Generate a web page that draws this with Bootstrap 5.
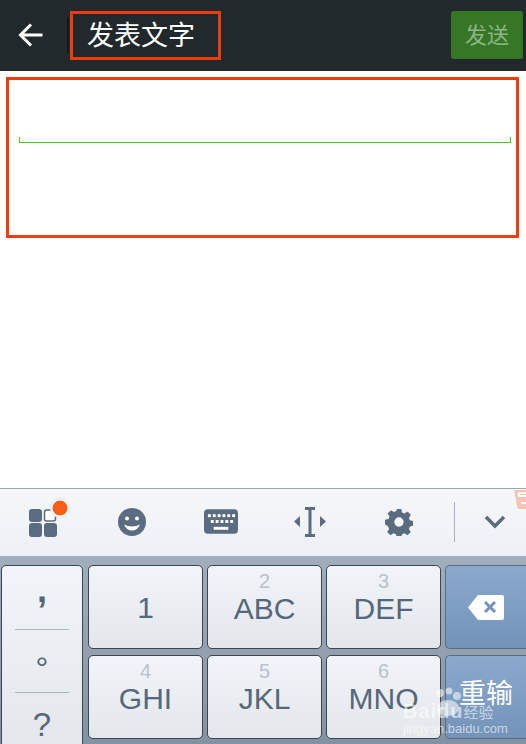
<!DOCTYPE html>
<html lang="zh">

<head>
  <meta charset="UTF-8" />
  <meta name="viewport" content="width=device-width, initial-scale=1" />
  <title>发表文字</title>
  <link href="https://cdn.jsdelivr.net/npm/bootstrap@5.3.3/dist/css/bootstrap.min.css" rel="stylesheet">
  <style>
    html, body { height: 744px; overflow: hidden; }
    body { font-family: "Liberation Sans", "Noto Sans CJK SC", sans-serif; background: #fff; }
    .screen { height: 744px; position: relative; overflow: hidden; }
    .topbar { height: 71px; background: #22292d; padding: 11px 3px 12px 18px; }
    .back-icon { width: 26px; height: 26px; margin-right: 26px; flex: none; }
    .title-box { width: 151px; height: 49px; border: 3px solid #f03c0c; padding-left: 14px; color: #fff; font-size: 27px; line-height: 45px; position: relative; }
    .title-box::before { content: ""; position: absolute; left: -6px; top: 3px; bottom: 4px; width: 2px; background: #14181b; }
    .send-btn { width: 72px; height: 48px; background: #357725; color: #8fb587; font-size: 22px; border-radius: 3px; border: 0; padding: 0; }
    .editor-wrap { padding: 6px 7px 0 6px; height: 417px; }
    .editor-box { height: 161px; border: 3px solid #f03c0c; padding: 57px 5px 0 10px; }
    .green-line { height: 6px; border: 1px solid #4fc31f; border-top: 0; }
    .toolbar { height: 68px; border-top: 1px solid #9aa8b5; background: linear-gradient(#f5f7fa, #edf0f5); position: relative; padding-bottom: 2px; }
    .tool-slot { width: 89px; }
    .tool-first { width: 87px; }
    .apps-icon { margin: -10px 0 0 12px; }
    .tool-sep { width: 1px; height: 40px; background: #a5b0bc; margin-left: 11px; }
    .chevron-slot { padding-left: 9px; }
    .sogou-mark { position: absolute; right: 0; top: 0; }
    .keys { height: 188px; background: linear-gradient(#a1aebc, #8392a2); padding: 9px 0 0 1px; gap: 5px; }
    .kb-side { width: 82px; height: 190px; flex: none; padding: 0 13px; }
    .kb-side-item { height: 63.5px; color: #56677b; border-bottom: 1px solid #a9b4c0; font-size: 30px; line-height: 1; }
    .kb-side-item:last-child { border-bottom: 0; font-size: 33px; }
    .kb-comma { font-size: 36px; padding-bottom: 14px; font-weight: 700; }
    .kb-degree { padding-top: 14px; font-size: 32px; }
    .kb-grid { display: grid; grid-template-columns: 115px 115px 115px 81px; grid-auto-rows: 84px; gap: 6px 4px; flex: 1; }
    .kb-key { background: linear-gradient(#f1f4f8, #e3e6ea); border: 1px solid #3c4752; border-radius: 5px; color: #56677b; }
    .kb-action { background: linear-gradient(#8ba9cd, #7393b9); border-color: #5a6d82; border-right: 0; border-radius: 5px 0 0 5px; color: #fff; }
    .kb-num { font-size: 20px; line-height: 20px; color: #b9c1ca; height: 20px; margin-top: 5px; }
    .kb-main { font-size: 30px; line-height: 36px; }
    .kb-solo { font-size: 30px; line-height: 36px; margin-top: 2px; }
    .kb-action-label { font-size: 27px; line-height: 30px; margin-top: 23px; margin-left: 13px; }
    .wm-block { position: absolute; left: 403px; top: 701px; color: rgba(255,255,255,.62); line-height: 1; width: 100px; }
    .wm-logo { font-size: 20px; font-weight: 700; letter-spacing: 1px; }
    .wm-jing { font-size: 15px; }
    .wm-url { font-size: 13px; margin-top: 1px; }
    .wm-paw { position: absolute; left: 31px; top: -14px; width: 28px; height: 30px; }
  </style>
</head>

<body>
  <div class="screen">
    <div class="topbar d-flex align-items-center">
      <svg class="back-icon" viewBox="0 0 26 26">
        <path d="M24.500 13H2.500M13 2.500 2.500 13 13 23.500" fill="none" stroke="#fff" stroke-width="3" />
      </svg>
      <div class="title-box">发表文字</div>
      <button class="send-btn ms-auto" type="button">发送</button>
    </div>

    <div class="editor-wrap">
      <div class="editor-box">
        <div class="green-line"></div>
      </div>
    </div>

    <div class="toolbar d-flex align-items-center">
      <div class="tool-first d-flex justify-content-center">
        <svg class="apps-icon" width="42" height="42" viewBox="0 0 42 42">
          <g fill="#5b6c80">
            <rect x="0" y="13" width="13" height="13" rx="3" />
            <rect x="0" y="27" width="13" height="14" rx="3" />
            <rect x="15" y="27" width="13" height="14" rx="3" />
          </g>
          <rect x="15.500" y="14" width="11" height="11" rx="2" fill="#fff" stroke="#5b6c80" stroke-width="1.500" />
          <circle cx="31" cy="12" r="9.500" fill="#fff" stroke="#e3e3e3" />
          <circle cx="31" cy="12" r="7.500" fill="#f4601a" />
        </svg>
      </div>
      <div class="tool-slot d-flex justify-content-center">
        <svg width="28" height="28" viewBox="0 0 28 28">
          <circle cx="14" cy="14" r="14" fill="#5b6c80" />
          <circle cx="9" cy="10.500" r="2" fill="#fff" />
          <circle cx="19" cy="10.500" r="2" fill="#fff" />
          <path d="M6 16.500c2 4.500 5 6 8 6s6-1.500 8-6c-5 2.500-11 2.500-16 0z" fill="#fff" />
        </svg>
      </div>
      <div class="tool-slot d-flex justify-content-center">
        <svg width="34" height="25" viewBox="0 0 35 25">
          <rect width="35" height="25" rx="4" fill="#5b6c80" />
          <g fill="#fff">
            <rect x="4" y="5" width="3" height="3" /><rect x="9" y="5" width="3" height="3" /><rect x="14" y="5" width="3" height="3" /><rect x="19" y="5" width="3" height="3" /><rect x="24" y="5" width="3" height="3" /><rect x="29" y="5" width="3" height="3" />
            <rect x="7" y="11" width="3" height="3" /><rect x="12" y="11" width="3" height="3" /><rect x="17" y="11" width="3" height="3" /><rect x="22" y="11" width="3" height="3" /><rect x="27" y="11" width="3" height="3" />
            <rect x="10" y="18" width="15" height="3" />
          </g>
        </svg>
      </div>
      <div class="tool-slot d-flex justify-content-center">
        <svg width="32" height="30" viewBox="0 0 32 30">
          <path d="M6 9v11l-6-5.500zM26 9v11l6-5.500z" fill="#5b6c80" />
          <path d="M11 1.500h10M11 28.500h10M16 1.500v27" fill="none" stroke="#5b6c80" stroke-width="3" />
        </svg>
      </div>
      <div class="tool-slot d-flex justify-content-center">
        <svg width="28" height="28" viewBox="0 0 30 30">
          <path d="M12.500 1h5l.8 3.800 2.600 1.100 3.300-2.100 3.500 3.500-2.100 3.300 1.100 2.600 3.800.8v5l-3.800.8-1.100 2.600 2.100 3.300-3.500 3.500-3.300-2.100-2.600 1.100-.8 2.800h-5l-.8-2.800-2.600-1.100-3.300 2.100-3.500-3.500 2.100-3.300-1.100-2.600L0 17.500v-5l3.800-.8 1.100-2.600-2.100-3.300 3.500-3.500 3.300 2.100 2.600-1.100z" fill="#5b6c80" />
          <circle cx="15" cy="15" r="5" fill="#f1f4f8" />
        </svg>
      </div>
      <div class="tool-sep"></div>
      <div class="chevron-slot flex-grow-1 d-flex justify-content-center">
        <svg width="22" height="14" viewBox="0 0 22 14">
          <path d="M2 2l9 9 9-9" fill="none" stroke="#5b6c80" stroke-width="3.500" />
        </svg>
      </div>
      <svg class="sogou-mark" width="12" height="22" viewBox="0 0 12 22">
        <path d="M0 1h12v19H6c-2 0-3-1-3-3z" fill="#f4c6b2" />
        <path d="M12 4H6c-2 0-2 3 0 3h6M7 14h5" fill="none" stroke="#fff" stroke-width="2" />
      </svg>
    </div>

    <div class="keys d-flex">
      <div class="kb-key kb-side">
        <div class="kb-side-item kb-comma d-flex align-items-center justify-content-center">,</div>
        <div class="kb-side-item kb-degree d-flex align-items-center justify-content-center">°</div>
        <div class="kb-side-item d-flex align-items-center justify-content-center">?</div>
      </div>
      <div class="kb-grid">
        <div class="kb-key d-flex align-items-center justify-content-center"><div class="kb-solo">1</div></div>
        <div class="kb-key text-center"><div class="kb-num">2</div><div class="kb-main">ABC</div></div>
        <div class="kb-key text-center"><div class="kb-num">3</div><div class="kb-main">DEF</div></div>
        <div class="kb-key kb-action d-flex align-items-center justify-content-center">
          <svg width="36" height="25" viewBox="0 0 36 25">
            <path d="M10 0h24a2 2 0 0 1 2 2v21a2 2 0 0 1-2 2H10L0 12.500z" fill="#fff" />
            <path d="M17 7l10 10M27 7 17 17" stroke="#7393b9" stroke-width="3" />
          </svg>
        </div>
        <div class="kb-key text-center"><div class="kb-num">4</div><div class="kb-main">GHI</div></div>
        <div class="kb-key text-center"><div class="kb-num">5</div><div class="kb-main">JKL</div></div>
        <div class="kb-key text-center"><div class="kb-num">6</div><div class="kb-main">MNO</div></div>
        <div class="kb-key kb-action"><div class="kb-action-label">重输</div></div>
      </div>
    </div>

    <div class="wm-block">
      <svg class="wm-paw" viewBox="0 0 28 30">
        <g fill="rgba(255,255,255,.55)">
          <circle cx="6" cy="6" r="4" /><circle cx="15" cy="4" r="3.500" /><circle cx="23" cy="9" r="4" /><ellipse cx="14" cy="21" rx="11" ry="8" />
        </g>
      </svg>
      <div class="text-nowrap"><span class="wm-logo">Baidu</span><span class="wm-jing">经验</span></div>
      <div class="wm-url text-nowrap">jingyan.baidu.com</div>
    </div>
  </div>
</body>

</html>
